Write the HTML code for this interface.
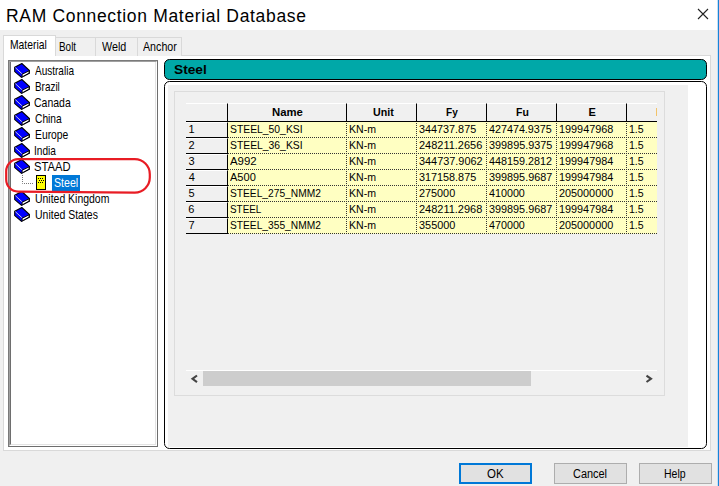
<!DOCTYPE html>
<html><head><meta charset="utf-8"><title>RAM Connection Material Database</title>
<style>
html,body{margin:0;padding:0;}
body{width:719px;height:486px;position:relative;overflow:hidden;background:#f0f0f0;font-family:"Liberation Sans",sans-serif;font-size:11px;color:#000;}
.abs{position:absolute;}
.x{position:absolute;white-space:nowrap;transform-origin:0 50%;display:block;}
.tt{font-size:12.2px;}
.th{font-size:11px;font-weight:bold;}
.td{font-size:11px;}
.tb{font-size:13px;font-weight:bold;}
.tk{font-size:12.3px;}
#titlebar{left:0;top:0;width:719px;height:30px;background:#fff;}
#title{left:6px;top:5px;font-size:17.5px;letter-spacing:0.67px;line-height:22px;white-space:nowrap;color:#000;}
#blue{left:717px;top:0;width:1px;height:486px;background:#1883d7;border-left:1px solid #c4dff5;}
#pane{left:3px;top:55px;width:708px;height:396px;background:#fff;border:1px solid #d9d9d9;box-sizing:border-box;}
.tab{top:37px;height:19px;box-sizing:border-box;border:1px solid #d9d9d9;border-bottom:none;background:#f0f0f0;}
#tabsel{left:3px;top:35px;width:53px;height:21px;background:#fff;border:1px solid #d9d9d9;border-bottom:none;box-sizing:border-box;}
#tree{left:8px;top:60px;width:150px;height:387px;box-sizing:border-box;background:#fff;border:1px solid #7a7a7a;border-right-color:#6e6e6e;border-bottom-color:#6e6e6e;}
#tree i{position:absolute;left:0;top:0;right:0;bottom:0;border:1px solid #a0a0a0;border-right-color:#fff;border-bottom-color:#fff;}
#tree b{position:absolute;left:1px;top:1px;right:1px;bottom:1px;border-left:1px solid #6e6e6e;border-right:1px solid #e3e3e3;border-bottom:1px solid #e3e3e3;}
.bk{left:14px;width:16px;height:16px;}
#bar{left:164px;top:59px;width:543px;height:21px;box-sizing:border-box;border:1.2px solid #000;border-radius:5.5px;background:#00a8a8;}
#box{left:164px;top:81px;width:543px;height:368px;box-sizing:border-box;border:1.2px solid #000;border-radius:5.5px;background:#fff;}
#grey{left:168px;top:85px;width:520px;height:362px;background:#f0f0f0;}
#groove{left:174px;top:91px;width:491px;height:305px;box-sizing:border-box;border:1px solid #dcdcdc;}
.hd{top:103px;height:19px;background:#f0f0f0;border-top:1px solid #fff;border-bottom:1px solid #000;border-right:1px solid #000;box-sizing:border-box;}
.rh{left:186px;width:42px;height:16px;background:#f0f0f0;border-top:1px solid #fff;border-bottom:1px solid #000;border-right:1px solid #000;box-sizing:border-box;}
.hl{left:228px;width:429px;height:1px;background:repeating-linear-gradient(to right,#333 0,#333 1px,transparent 1px,transparent 2px);}
.vl{top:123px;width:1px;height:111px;background:repeating-linear-gradient(to bottom,#333 0,#333 1px,transparent 1px,transparent 2px);}
.btn{top:463px;width:73px;height:21px;box-sizing:border-box;background:#e1e1e1;border:1px solid #adadad;}
</style></head><body>
<div id="titlebar" class="abs"></div>
<div id="title" class="abs">RAM Connection Material Database</div>
<svg class="abs" style="left:696px;top:7px" width="14" height="14" viewBox="0 0 14 14"><path d="M2 2 L12 12 M12 2 L2 12" stroke="#222" stroke-width="1.1" fill="none"/></svg>
<div id="blue" class="abs"></div>

<div id="pane" class="abs"></div>
<div class="tab abs" style="left:55px;width:41px"></div>
<div class="tab abs" style="left:95px;width:43px"></div>
<div class="tab abs" style="left:137px;width:45px"></div>
<div id="tabsel" class="abs"></div>
<span id="b0" class="x tt" style="left:10.41px;top:37px;height:16px;line-height:16px;color:#000;transform:scaleX(0.8482)">Material</span><span id="b1" class="x tt" style="left:59.49px;top:39px;height:16px;line-height:16px;color:#000;transform:scaleX(0.8135)">Bolt</span><span id="b2" class="x tt" style="left:102.11px;top:39px;height:16px;line-height:16px;color:#000;transform:scaleX(0.8830)">Weld</span><span id="b3" class="x tt" style="left:143.36px;top:39px;height:16px;line-height:16px;color:#000;transform:scaleX(0.8752)">Anchor</span>

<div id="tree" class="abs"><i></i><b></b></div>
<svg width="0" height="0" style="position:absolute"><defs>
<g id="book">
<path d="M0.7 4.3 L7.9 0.5 L15.5 7.5 L15.5 10.2 L7.5 14.4 L0.7 8.6 Z" fill="#0000ff" stroke="#000" stroke-width="1.1"/>
<path d="M8 11.3 L15.1 7.8 L15.1 10.1 L8.2 13.9 Z" fill="#fff" stroke="#000" stroke-width="1"/>
<path d="M1.3 4.6 L7.9 10.7" stroke="#f4f4d8" stroke-width="0.8" fill="none"/>
</g></defs></svg>
<svg class="bk abs" style="top:63px"><use href="#book"/></svg><span id="t0" class="x tt" style="left:34.88px;top:63px;height:16px;line-height:16px;color:#000;transform:scaleX(0.8215)">Australia</span>
<svg class="bk abs" style="top:79px"><use href="#book"/></svg><span id="t1" class="x tt" style="left:34.57px;top:79px;height:16px;line-height:16px;color:#000;transform:scaleX(0.8138)">Brazil</span>
<svg class="bk abs" style="top:95px"><use href="#book"/></svg><span id="t2" class="x tt" style="left:34.41px;top:95px;height:16px;line-height:16px;color:#000;transform:scaleX(0.8598)">Canada</span>
<svg class="bk abs" style="top:111px"><use href="#book"/></svg><span id="t3" class="x tt" style="left:34.62px;top:111px;height:16px;line-height:16px;color:#000;transform:scaleX(0.8396)">China</span>
<svg class="bk abs" style="top:127px"><use href="#book"/></svg><span id="t4" class="x tt" style="left:35.17px;top:127px;height:16px;line-height:16px;color:#000;transform:scaleX(0.8489)">Europe</span>
<svg class="bk abs" style="top:143px"><use href="#book"/></svg><span id="t5" class="x tt" style="left:34.39px;top:143px;height:16px;line-height:16px;color:#000;transform:scaleX(0.8307)">India</span>
<svg class="bk abs" style="top:159px"><use href="#book"/></svg><span id="t6" class="x tt" style="left:34.19px;top:159px;height:16px;line-height:16px;color:#000;transform:scaleX(0.9199)">STAAD</span>
<svg class="abs" style="left:20px;top:174px" width="30" height="18" viewBox="0 0 30 18">
<path d="M2.5 1 V9.5 H13" stroke="#777" stroke-width="1" stroke-dasharray="1 1" fill="none"/>
<rect x="16.5" y="1.5" width="9" height="14" fill="#ffff00" stroke="#000" stroke-width="1"/>
<g fill="#000"><rect x="18" y="4" width="1" height="1"/><rect x="20" y="4" width="1" height="1"/><rect x="22" y="4" width="1" height="1"/>
<rect x="19" y="6" width="1" height="1"/><rect x="21" y="6" width="1" height="1"/><rect x="23" y="6" width="1" height="1"/>
<rect x="18" y="8" width="1" height="1"/><rect x="20" y="8" width="1" height="1"/><rect x="22" y="8" width="1" height="1"/></g>
</svg>
<div class="abs" style="left:52px;top:175px;width:27.8px;height:15.6px;background:#0078d7"></div><span id="t7" class="x tt" style="left:54.07px;top:175px;height:16px;line-height:16px;color:#fff;transform:scaleX(0.8707)">Steel</span>
<svg class="bk abs" style="top:191px"><use href="#book"/></svg><span id="t8" class="x tt" style="left:35.20px;top:191px;height:16px;line-height:16px;color:#000;transform:scaleX(0.8572)">United Kingdom</span>
<svg class="bk abs" style="top:207px"><use href="#book"/></svg><span id="t9" class="x tt" style="left:35.20px;top:207px;height:16px;line-height:16px;color:#000;transform:scaleX(0.8602)">United States</span>
<svg class="abs" style="left:0;top:150px" width="160" height="50" viewBox="0 150 160 50"><path d="M18.2 159.2 H134.8 A15 15 0 0 1 149.8 174.2 V177.6 A15 15 0 0 1 134.8 192.6 L18.2 191.6 A12 12 0 0 1 6.2 179.6 V171.2 A12 12 0 0 1 18.2 159.2 Z" fill="none" stroke="#e81c24" stroke-width="2.2"/></svg>

<div id="bar" class="abs"></div><span id="bt" class="x tb" style="left:173.67px;top:62px;height:16px;line-height:16px;color:#000;transform:scaleX(1.0548)">Steel</span>
<div id="box" class="abs"></div><div id="grey" class="abs"></div><div id="groove" class="abs"></div>

<div class="hd abs" style="left:186px;width:42px"></div><div class="hd abs" style="left:228px;width:119px"></div><div class="hd abs" style="left:347px;width:70px"></div><div class="hd abs" style="left:417px;width:70px"></div><div class="hd abs" style="left:487px;width:70px"></div><div class="hd abs" style="left:557px;width:70px"></div><div class="hd abs" style="left:627px;width:30px;border-right:none"></div>
<span id="h0" class="x th" style="left:271.86px;top:104px;height:17px;line-height:17px;color:#000;transform:scaleX(1.0305)">Name</span><span id="h1" class="x th" style="left:372.67px;top:104px;height:17px;line-height:17px;color:#000;transform:scaleX(0.9708)">Unit</span><span id="h2" class="x th" style="left:445.67px;top:104px;height:17px;line-height:17px;color:#000;transform:scaleX(0.9169)">Fy</span><span id="h3" class="x th" style="left:516.25px;top:104px;height:17px;line-height:17px;color:#000;transform:scaleX(0.9520)">Fu</span><span id="h4" class="x th" style="left:588.51px;top:104px;height:17px;line-height:17px;color:#000;transform:scaleX(1.0000)">E</span>
<div class="abs" style="left:656px;top:108px;width:1px;height:8px;background:#f2c36a"></div>
<div class="abs" style="left:228px;top:122px;width:429px;height:112px;background:#ffffc2"></div>
<div class="rh abs" style="top:122px"></div><div class="hl abs" style="top:137px"></div><div class="rh abs" style="top:138px"></div><div class="hl abs" style="top:153px"></div><div class="rh abs" style="top:154px"></div><div class="hl abs" style="top:169px"></div><div class="rh abs" style="top:170px"></div><div class="hl abs" style="top:185px"></div><div class="rh abs" style="top:186px"></div><div class="hl abs" style="top:201px"></div><div class="rh abs" style="top:202px"></div><div class="hl abs" style="top:217px"></div><div class="rh abs" style="top:218px"></div><div class="hl abs" style="top:233px"></div>
<div class="vl abs" style="left:346px"></div><div class="vl abs" style="left:416px"></div><div class="vl abs" style="left:486px"></div><div class="vl abs" style="left:556px"></div><div class="vl abs" style="left:626px"></div>
<span id="n0" class="x td" style="left:188.61px;top:122px;height:15px;line-height:15px;color:#000;transform:scaleX(1.0000)">1</span><span id="c0_0" class="x td" style="left:229.55px;top:122px;height:15px;line-height:15px;color:#000;transform:scaleX(0.9421)">STEEL_50_KSI</span><span id="c0_1" class="x td" style="left:348.95px;top:122px;height:15px;line-height:15px;color:#000;transform:scaleX(0.9597)">KN-m</span><span id="c0_2" class="x td" style="left:419.05px;top:122px;height:15px;line-height:15px;color:#000;transform:scaleX(0.9838)">344737.875</span><span id="c0_3" class="x td" style="left:488.94px;top:122px;height:15px;line-height:15px;color:#000;transform:scaleX(0.9769)">427474.9375</span><span id="c0_4" class="x td" style="left:558.74px;top:122px;height:15px;line-height:15px;color:#000;transform:scaleX(0.9875)">199947968</span><span id="c0_5" class="x td" style="left:629.44px;top:122px;height:15px;line-height:15px;color:#000;transform:scaleX(0.9596)">1.5</span>
<span id="n1" class="x td" style="left:188.40px;top:138px;height:15px;line-height:15px;color:#000;transform:scaleX(1.0000)">2</span><span id="c1_0" class="x td" style="left:229.55px;top:138px;height:15px;line-height:15px;color:#000;transform:scaleX(0.9421)">STEEL_36_KSI</span><span id="c1_1" class="x td" style="left:348.95px;top:138px;height:15px;line-height:15px;color:#000;transform:scaleX(0.9597)">KN-m</span><span id="c1_2" class="x td" style="left:418.76px;top:138px;height:15px;line-height:15px;color:#000;transform:scaleX(0.9970)">248211.2656</span><span id="c1_3" class="x td" style="left:489.05px;top:138px;height:15px;line-height:15px;color:#000;transform:scaleX(0.9869)">399895.9375</span><span id="c1_4" class="x td" style="left:558.74px;top:138px;height:15px;line-height:15px;color:#000;transform:scaleX(0.9875)">199947968</span><span id="c1_5" class="x td" style="left:629.44px;top:138px;height:15px;line-height:15px;color:#000;transform:scaleX(0.9596)">1.5</span>
<span id="n2" class="x td" style="left:188.40px;top:154px;height:15px;line-height:15px;color:#000;transform:scaleX(1.0000)">3</span><span id="c2_0" class="x td" style="left:230.14px;top:154px;height:15px;line-height:15px;color:#000;transform:scaleX(1.0386)">A992</span><span id="c2_1" class="x td" style="left:348.95px;top:154px;height:15px;line-height:15px;color:#000;transform:scaleX(0.9597)">KN-m</span><span id="c2_2" class="x td" style="left:419.05px;top:154px;height:15px;line-height:15px;color:#000;transform:scaleX(0.9890)">344737.9062</span><span id="c2_3" class="x td" style="left:488.94px;top:154px;height:15px;line-height:15px;color:#000;transform:scaleX(0.9823)">448159.2812</span><span id="c2_4" class="x td" style="left:558.74px;top:154px;height:15px;line-height:15px;color:#000;transform:scaleX(0.9854)">199947984</span><span id="c2_5" class="x td" style="left:629.44px;top:154px;height:15px;line-height:15px;color:#000;transform:scaleX(0.9596)">1.5</span>
<span id="n3" class="x td" style="left:188.75px;top:170px;height:15px;line-height:15px;color:#000;transform:scaleX(1.0000)">4</span><span id="c3_0" class="x td" style="left:230.10px;top:170px;height:15px;line-height:15px;color:#000;transform:scaleX(1.0037)">A500</span><span id="c3_1" class="x td" style="left:348.95px;top:170px;height:15px;line-height:15px;color:#000;transform:scaleX(0.9597)">KN-m</span><span id="c3_2" class="x td" style="left:419.05px;top:170px;height:15px;line-height:15px;color:#000;transform:scaleX(0.9838)">317158.875</span><span id="c3_3" class="x td" style="left:489.05px;top:170px;height:15px;line-height:15px;color:#000;transform:scaleX(0.9848)">399895.9687</span><span id="c3_4" class="x td" style="left:558.74px;top:170px;height:15px;line-height:15px;color:#000;transform:scaleX(0.9854)">199947984</span><span id="c3_5" class="x td" style="left:629.44px;top:170px;height:15px;line-height:15px;color:#000;transform:scaleX(0.9596)">1.5</span>
<span id="n4" class="x td" style="left:188.51px;top:186px;height:15px;line-height:15px;color:#000;transform:scaleX(1.0000)">5</span><span id="c4_0" class="x td" style="left:229.67px;top:186px;height:15px;line-height:15px;color:#000;transform:scaleX(0.9288)">STEEL_275_NMM2</span><span id="c4_1" class="x td" style="left:348.95px;top:186px;height:15px;line-height:15px;color:#000;transform:scaleX(0.9597)">KN-m</span><span id="c4_2" class="x td" style="left:418.82px;top:186px;height:15px;line-height:15px;color:#000;transform:scaleX(0.9854)">275000</span><span id="c4_3" class="x td" style="left:488.94px;top:186px;height:15px;line-height:15px;color:#000;transform:scaleX(0.9763)">410000</span><span id="c4_4" class="x td" style="left:558.80px;top:186px;height:15px;line-height:15px;color:#000;transform:scaleX(0.9846)">205000000</span><span id="c4_5" class="x td" style="left:629.44px;top:186px;height:15px;line-height:15px;color:#000;transform:scaleX(0.9596)">1.5</span>
<span id="n5" class="x td" style="left:188.33px;top:202px;height:15px;line-height:15px;color:#000;transform:scaleX(1.0000)">6</span><span id="c5_0" class="x td" style="left:229.88px;top:202px;height:15px;line-height:15px;color:#000;transform:scaleX(0.8985)">STEEL</span><span id="c5_1" class="x td" style="left:348.95px;top:202px;height:15px;line-height:15px;color:#000;transform:scaleX(0.9597)">KN-m</span><span id="c5_2" class="x td" style="left:418.76px;top:202px;height:15px;line-height:15px;color:#000;transform:scaleX(0.9977)">248211.2968</span><span id="c5_3" class="x td" style="left:489.05px;top:202px;height:15px;line-height:15px;color:#000;transform:scaleX(0.9848)">399895.9687</span><span id="c5_4" class="x td" style="left:558.74px;top:202px;height:15px;line-height:15px;color:#000;transform:scaleX(0.9854)">199947984</span><span id="c5_5" class="x td" style="left:629.44px;top:202px;height:15px;line-height:15px;color:#000;transform:scaleX(0.9596)">1.5</span>
<span id="n6" class="x td" style="left:188.54px;top:218px;height:15px;line-height:15px;color:#000;transform:scaleX(1.0000)">7</span><span id="c6_0" class="x td" style="left:229.67px;top:218px;height:15px;line-height:15px;color:#000;transform:scaleX(0.9288)">STEEL_355_NMM2</span><span id="c6_1" class="x td" style="left:348.95px;top:218px;height:15px;line-height:15px;color:#000;transform:scaleX(0.9597)">KN-m</span><span id="c6_2" class="x td" style="left:419.04px;top:218px;height:15px;line-height:15px;color:#000;transform:scaleX(0.9913)">355000</span><span id="c6_3" class="x td" style="left:488.94px;top:218px;height:15px;line-height:15px;color:#000;transform:scaleX(0.9763)">470000</span><span id="c6_4" class="x td" style="left:558.80px;top:218px;height:15px;line-height:15px;color:#000;transform:scaleX(0.9846)">205000000</span><span id="c6_5" class="x td" style="left:629.44px;top:218px;height:15px;line-height:15px;color:#000;transform:scaleX(0.9596)">1.5</span>
<div class="abs" style="left:186px;top:370px;width:471px;height:1px;background:#fff"></div>
<div class="abs" style="left:203px;top:371px;width:328px;height:15px;background:#cdcdcd"></div>
<svg class="abs" style="left:189px;top:373px" width="12" height="12" viewBox="0 0 12 12"><path d="M8 2.5 L3.5 5.8 L8 9.1" stroke="#444" stroke-width="2.1" fill="none"/></svg>
<svg class="abs" style="left:643px;top:373px" width="12" height="12" viewBox="0 0 12 12"><path d="M3.5 2.6 L8 5.8 L3.5 9" stroke="#444" stroke-width="2.1" fill="none"/></svg>
<div class="btn abs" style="left:459px;border:2px solid #0078d7"></div>
<div class="btn abs" style="left:554px"></div>
<div class="btn abs" style="left:639px"></div>
<span id="k0" class="x tk" style="left:486.86px;top:466px;height:17px;line-height:17px;color:#000;transform:scaleX(0.9332)">OK</span><span id="k1" class="x tk" style="left:573.44px;top:466px;height:17px;line-height:17px;color:#000;transform:scaleX(0.8893)">Cancel</span><span id="k2" class="x tk" style="left:664.11px;top:466px;height:17px;line-height:17px;color:#000;transform:scaleX(0.8520)">Help</span>
</body></html>
